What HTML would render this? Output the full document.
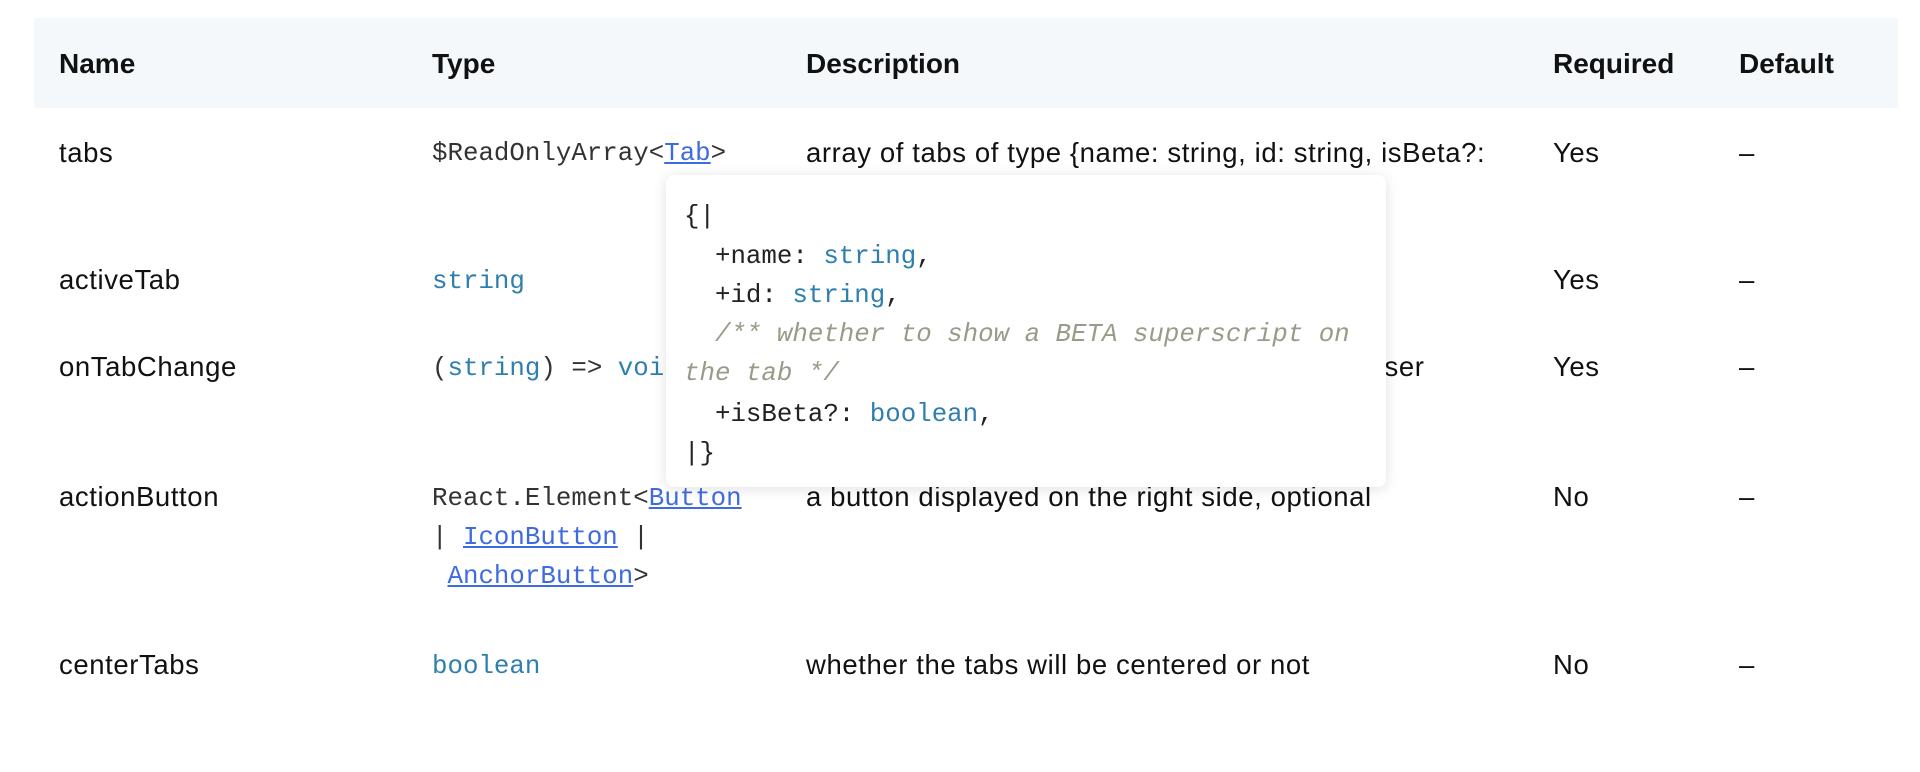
<!DOCTYPE html>
<html><head><meta charset="utf-8"><style>
body{margin:0;width:1920px;height:772px;background:#fff;position:relative;overflow:hidden;font-family:"Liberation Sans",sans-serif;color:#111;}
.t{position:absolute;font-size:27.5px;letter-spacing:0.6px;line-height:40px;white-space:nowrap;}
.b{font-weight:bold;font-size:28px;letter-spacing:0;}
.m{font-family:"Liberation Mono",monospace;font-size:25.8px;color:#333;letter-spacing:0;}
.k{color:#2f7fae;}
a{color:#3f6be0;text-decoration:underline;}
.hd{position:absolute;left:34px;top:18px;width:1864px;height:90px;background:#f5f8fb;}
.pop{position:absolute;left:666px;top:175px;width:720px;height:312px;background:#fff;border-radius:8px;box-shadow:0 2px 14px rgba(0,0,0,0.12);}
.pl{position:absolute;font-family:"Liberation Mono",monospace;font-size:25.8px;line-height:40px;white-space:nowrap;color:#222;}
.c{color:#9a9a8a;font-style:italic;}
</style></head><body>
<div class="hd"></div>
<div class="t b" style="left:59px;top:44px">Name</div>
<div class="t b" style="left:432px;top:44px">Type</div>
<div class="t b" style="left:806px;top:44px">Description</div>
<div class="t b" style="left:1553px;top:44px">Required</div>
<div class="t b" style="left:1739px;top:44px">Default</div>

<div class="t" style="left:59px;top:133px">tabs</div>
<div class="t m" style="left:432px;top:134px">$ReadOnlyArray&lt;<a>Tab</a>&gt;</div>
<div class="t" style="left:806px;top:133px">array of tabs of type {name: string, id: string, isBeta?:</div>
<div class="t" style="left:1553px;top:133px">Yes</div>
<div class="t" style="left:1739px;top:133px">–</div>

<div class="t" style="left:59px;top:260px">activeTab</div>
<div class="t m k" style="left:432px;top:262px">string</div>
<div class="t" style="left:806px;top:260px">the id of the currently active tab</div>
<div class="t" style="left:1553px;top:260px">Yes</div>
<div class="t" style="left:1739px;top:260px">–</div>

<div class="t" style="left:59px;top:347px">onTabChange</div>
<div class="t m" style="left:432px;top:349px">(<span class="k">string</span>) =&gt; <span class="k">void</span></div>
<div class="t" style="left:806px;top:347px">a callback fired when a tab is clicked by the user</div>
<div class="t" style="left:1553px;top:347px">Yes</div>
<div class="t" style="left:1739px;top:347px">–</div>

<div class="t" style="left:59px;top:477px">actionButton</div>
<div class="t m" style="left:432px;top:479px">React.Element&lt;<a>Button</a></div>
<div class="t m" style="left:432px;top:518px">| <a>IconButton</a> |</div>
<div class="t m" style="left:432px;top:557px">&nbsp;<a>AnchorButton</a>&gt;</div>
<div class="t" style="left:806px;top:477px">a button displayed on the right side, optional</div>
<div class="t" style="left:1553px;top:477px">No</div>
<div class="t" style="left:1739px;top:477px">–</div>

<div class="t" style="left:59px;top:645px">centerTabs</div>
<div class="t m k" style="left:432px;top:647px">boolean</div>
<div class="t" style="left:806px;top:645px">whether the tabs will be centered or not</div>
<div class="t" style="left:1553px;top:645px">No</div>
<div class="t" style="left:1739px;top:645px">–</div>

<div class="pop">
<div class="pl" style="left:18px;top:22px">{|</div>
<div class="pl" style="left:18px;top:62px">&nbsp;&nbsp;+name: <span class="k">string</span>,</div>
<div class="pl" style="left:18px;top:101px">&nbsp;&nbsp;+id: <span class="k">string</span>,</div>
<div class="pl c" style="left:18px;top:140px">&nbsp;&nbsp;/** whether to show a BETA superscript on</div>
<div class="pl c" style="left:18px;top:179px">the tab */</div>
<div class="pl" style="left:18px;top:220px">&nbsp;&nbsp;+isBeta?: <span class="k">boolean</span>,</div>
<div class="pl" style="left:18px;top:259px">|}</div>
</div>
</body></html>
